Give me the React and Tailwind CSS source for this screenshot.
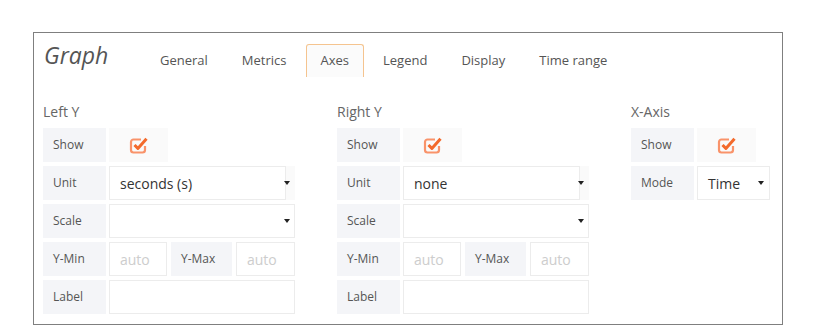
const tabs = ["General", "Metrics", "Axes", "Legend", "Display", "Time range"];

const Check = () => (
  <svg width="20" height="18" viewBox="0 0 20 18">
    <path
      d="M12 3.5H4.5A2.5 2.5 0 0 0 2 6v8A2.5 2.5 0 0 0 4.5 16.5h9A2.5 2.5 0 0 0 16 14v-4"
      fill="none"
      stroke="#f9936a"
      strokeWidth="2.2"
    />
    <path
      d="M5.5 9l3.4 3.4 8.6-9.6"
      fill="none"
      stroke="#f36a2c"
      strokeWidth="3"
      strokeLinejoin="round"
    />
  </svg>
);

const Caret = () => (
  <span className="absolute right-[5px] top-1/2 -translate-y-1/2 w-0 h-0 border-l-[3px] border-r-[3px] border-t-[4px] border-l-transparent border-r-transparent border-t-[#222]" />
);

const Label = ({ children, w = "w-[63px]" }) => (
  <div className={`${w} h-[34px] shrink-0 bg-[#f4f5f8] flex items-center pl-[10px] text-[12px] text-[#555]`}>
    {children}
  </div>
);

const ShowRow = () => (
  <div className="flex gap-[3px]">
    <Label>Show</Label>
    <div className="w-[59px] h-[34px] bg-[#fafafa] flex items-center justify-center">
      <Check />
    </div>
  </div>
);

const SelectBox = ({ value, inner = true }) => (
  <div className="relative flex-1 h-[34px] bg-[#fafafa]">
    <div
      className={`h-full ${inner ? "w-[177px]" : "w-full"} bg-white border border-[#ececec] flex items-center pl-[10px] text-[14px] text-[#333]`}
    >
      {value}
    </div>
    <Caret />
  </div>
);

const Input = ({ w, placeholder }) => (
  <div className={`${w} h-[34px] border border-[#ececec] bg-white flex items-center pl-[10px] text-[14px] text-[#cdcdcd]`}>
    {placeholder}
  </div>
);

const YAxis = ({ title, unit }) => (
  <div className="w-[252px] flex flex-col">
    <div className="h-[20px] mb-[6px] text-[14px] leading-[20px] text-[#666]">{title}</div>
    <div className="flex flex-col gap-[4px]">
      <ShowRow />
      <div className="flex gap-[3px]">
        <Label>Unit</Label>
        <SelectBox value={unit} />
      </div>
      <div className="flex gap-[3px]">
        <Label>Scale</Label>
        <SelectBox value="" inner={false} />
      </div>
      <div className="flex">
        <Label>Y-Min</Label>
        <div className="w-[3px]" />
        <Input w="w-[58px]" placeholder="auto" />
        <div className="w-[4px]" />
        <Label w="w-[61px]">Y-Max</Label>
        <div className="w-[4px]" />
        <Input w="flex-1" placeholder="auto" />
      </div>
      <div className="flex gap-[3px]">
        <Label>Label</Label>
        <Input w="flex-1" placeholder="" />
      </div>
    </div>
  </div>
);

export default function App() {
  return (
    <div className="w-[815px] h-[332px] bg-white pt-[32px] pl-[33px]" style={{ fontFamily: '"Open Sans", sans-serif' }}>
      <div className="w-[750px] h-[293px] border border-[#7f7f7f] pl-[9px]">
        <div className="flex items-end pt-[11px]">
          <div className="w-[102px] h-[33px] -mt-[4px] pl-[1px] text-[23px] italic text-[#555] leading-[30px] self-start">
            Graph
          </div>
          <div className="flex gap-[4px]">
            {tabs.map((t) => (
              <div
                key={t}
                className={`h-[33px] px-[14px] flex items-center text-[13px] text-[#555] border border-b-0 rounded-t-[3px] ${
                  t === "Axes" ? "border-[#f5c48f] bg-[#fbfbfb]" : "border-transparent"
                }`}
              >
                {t}
              </div>
            ))}
          </div>
        </div>
        <div className="flex gap-[42px] mt-[25px]">
          <YAxis title="Left Y" unit="seconds (s)" />
          <YAxis title="Right Y" unit="none" />
          <div className="flex flex-col">
            <div className="h-[20px] mb-[6px] text-[14px] leading-[20px] text-[#666]">X-Axis</div>
            <div className="flex flex-col gap-[4px]">
              <ShowRow />
              <div className="flex gap-[3px]">
                <Label>Mode</Label>
                <div className="relative w-[73px] h-[34px] bg-white border border-[#ececec] flex items-center pl-[10px] text-[14px] text-[#333]">
                  Time
                  <Caret />
                </div>
              </div>
            </div>
          </div>
        </div>
      </div>
    </div>
  );
}
